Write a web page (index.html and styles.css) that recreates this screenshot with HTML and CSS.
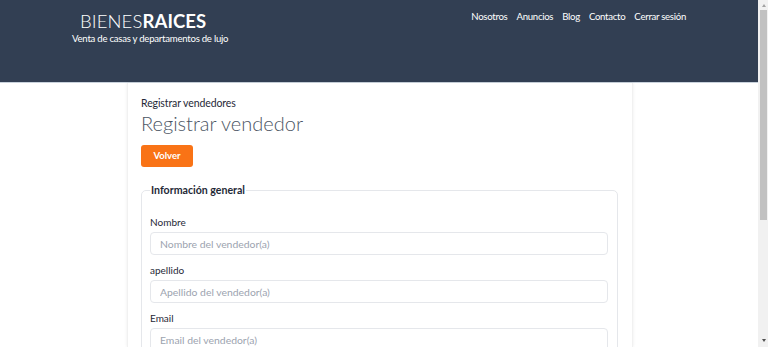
FILE: index.html
```html
<!DOCTYPE html>
<html lang="es">
<head>
<meta charset="utf-8">
<title>Bienes Raices</title>
<link rel="stylesheet" href="styles.css">
</head>
<body>
<div class="window">
  <div class="page">
    <header class="site-header">
      <div class="brand">
        <div class="logo"><span class="logo-light">BIENES</span><span class="logo-bold">RAICES</span></div>
        <p class="tagline">Venta de casas y departamentos de lujo</p>
      </div>
      <nav class="nav">
        <a href="#">Nosotros</a>
        <a href="#">Anuncios</a>
        <a href="#">Blog</a>
        <a href="#">Contacto</a>
        <a href="#">Cerrar sesión</a>
      </nav>
    </header>
    <main class="card">
      <p class="crumb">Registrar vendedores</p>
      <h1 class="title">Registrar vendedor</h1>
      <a class="btn" href="#">Volver</a>
      <form class="form">
        <fieldset class="fieldset">
          <legend class="legend">Información general</legend>
          <label class="label" for="nombre">Nombre</label>
          <input class="input" id="nombre" type="text" placeholder="Nombre del vendedor(a)">
          <label class="label" for="apellido">apellido</label>
          <input class="input" id="apellido" type="text" placeholder="Apellido del vendedor(a)">
          <label class="label" for="email">Email</label>
          <input class="input" id="email" type="email" placeholder="Email del vendedor(a)">
        </fieldset>
      </form>
    </main>
  </div>
  <div class="scrollbar">
    <div class="sb-arrow sb-up"></div>
    <div class="sb-track"><div class="sb-thumb"></div></div>
    <div class="sb-arrow sb-down"></div>
  </div>
</div>
</body>
</html>
```
FILE: styles.css
```css
* { box-sizing: border-box; }
html, body { margin: 0; padding: 0; }
body {
  font-family: Lato, "Open Sans", "Liberation Sans", sans-serif;
  background: #fff;
  color: #374151;
  overflow: hidden;
}
.window {
  display: flex;
  height: 347px;
  width: 768px;
}
.page {
  flex: 1;
  overflow: hidden;
  display: flex;
  flex-direction: column;
}
.site-header {
  flex: none;
  background: #323f53;
  height: 83px;
  display: flex;
  justify-content: space-between;
  align-items: flex-start;
  padding: 10px 72px 0 72px;
  border-bottom: 1px solid #c9d2dc;
}
.brand { display: flex; flex-direction: column; }
.logo {
  font-size: 18.5px;
  line-height: 22px;
  color: #fff;
  padding-left: 8px;
  letter-spacing: 0.1px;
}
.logo-light { font-weight: 300; }
.logo-bold { font-weight: 700; }
.tagline {
  margin: 0;
  font-size: 9.6px;
  color: #fff;
  line-height: 14px;
  letter-spacing: -0.25px;
}
.nav {
  display: flex;
  gap: 9px;
  padding-top: 0;
}
.nav a {
  color: #fff;
  text-decoration: none;
  font-size: 9.6px;
  line-height: 14px;
  letter-spacing: -0.28px;
}
.card {
  flex: none;
  width: 506px;
  height: 264px;
  margin-left: 127px;
  background: #fff;
  box-shadow: 0 0 3px rgba(0,0,0,0.08);
  border-left: 1px solid #f1f1f1;
  border-right: 1px solid #f1f1f1;
  padding: 14px 14px 0 13px;
}
.crumb {
  margin: 0;
  font-size: 10.5px;
  line-height: 12px;
  color: #1f2937;
  letter-spacing: -0.1px;
}
.title {
  margin: 0;
  font-size: 20px;
  font-weight: 300;
  line-height: 28px;
  color: #4b5563;
}
.btn {
  display: inline-block;
  margin-top: 8px;
  width: 52px;
  height: 22px;
  line-height: 22px;
  text-align: center;
  background: #f97316;
  color: #fff;
  font-weight: 700;
  font-size: 9.5px;
  border-radius: 3px;
  text-decoration: none;
}
.form { margin-top: 17px; }
.fieldset {
  margin: 0;
  width: 477px;
  border: 1px solid #e5e7eb;
  border-radius: 5px;
  padding: 19px 9px 0 8px;
}
.legend {
  font-size: 10.6px;
  font-weight: 700;
  color: #1f2937;
  padding: 0 1px;
}
.label {
  display: block;
  font-size: 10px;
  line-height: 14px;
  color: #1f2937;
  margin-bottom: 3px;
}
.input {
  display: block;
  width: 458px;
  height: 23px;
  border: 1px solid #e5e7eb;
  border-radius: 4px;
  padding: 0 9px;
  font-family: inherit;
  font-size: 10.4px;
  color: #374151;
  margin-bottom: 8px;
  background: #fff;
}
.input::placeholder { color: #9ca3af; }
.scrollbar {
  width: 10px;
  background: #f1f1f1;
  display: flex;
  flex-direction: column;
  align-items: flex-end;
  padding-right: 1px;
}
.sb-arrow {
  width: 0;
  height: 0;
  border-left: 2.5px solid transparent;
  border-right: 2.5px solid transparent;
  margin: 4px 1px 3px 0;
}
.sb-up { border-bottom: 3px solid #a3a3a3; }
.sb-down { border-top: 3px solid #505050; margin-bottom: 5px; }
.sb-track {
  flex: 1;
  width: 7px;
}
.sb-thumb {
  width: 7px;
  height: 210px;
  background: #c1c1c1;
}
```
